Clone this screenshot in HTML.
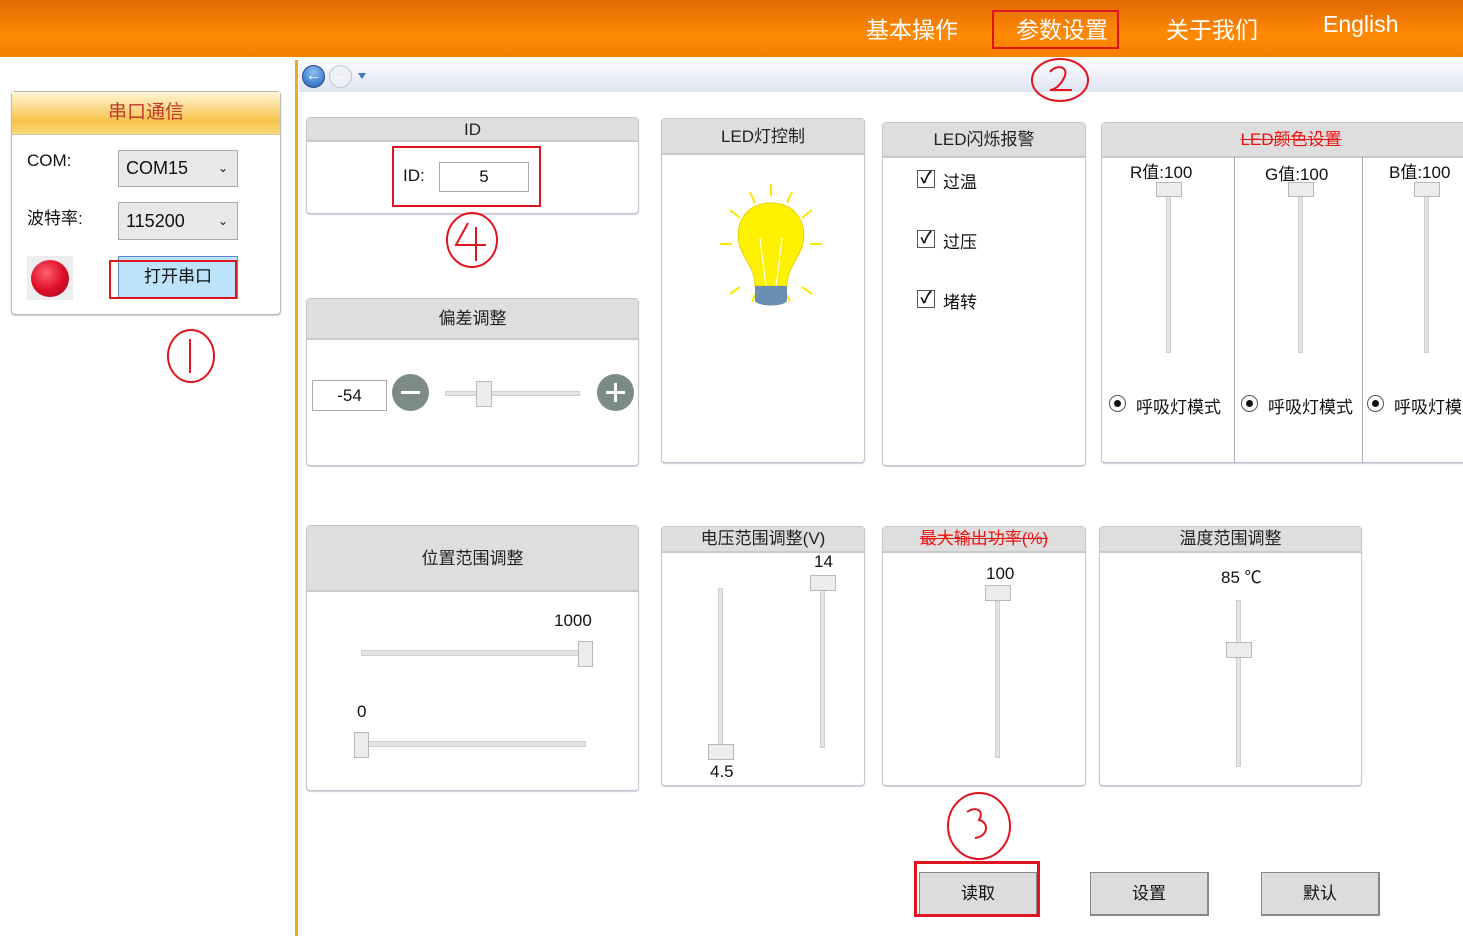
<!DOCTYPE html>
<html><head><meta charset="utf-8"><style>
*{margin:0;padding:0;box-sizing:border-box}
body{width:1463px;height:936px;background:#fff;position:relative;overflow:hidden;font-family:"Liberation Sans","Noto Sans CJK SC",sans-serif;color:#111}
.a{position:absolute}
.top{left:0;top:0;width:1463px;height:57px;background:linear-gradient(#e06800,#ff8a05 60%,#f57f00)}
.nav{color:#fff;font-size:23px;top:11px}
.panel{position:absolute;border:1px solid #c4c8cc;border-radius:4px;background:#fff;box-shadow:0 1px 1px #ccd}
.hd{background:#dedede;border-bottom:2px solid #c6cbd0;text-align:center;font-size:17px;color:#222;white-space:nowrap}
.thumb{position:absolute;background:#ececec;border:1px solid #b8b8b8}
.track{position:absolute;background:#e4e4e4;border:1px solid #d0d0d0}
.cb{position:absolute;width:18px;height:18px;border:1px solid #555;background:#fff;font-size:16px;line-height:16px;text-align:center;font-weight:bold}
.rd{position:absolute;width:17px;height:17px;border:1px solid #555;border-radius:50%;background:#fff}
.rd:after{content:"";position:absolute;left:4px;top:4px;width:7px;height:7px;border-radius:50%;background:#111}
.btn{position:absolute;width:119px;height:44px;background:#dcdcdc;border:1px solid #888;border-width:1px 2px 2px 1px;text-align:center;line-height:42px;font-size:17px}
.red{position:absolute;border:2px solid #e0141e}
.t{position:absolute;font-size:17px;white-space:nowrap}
</style></head><body>
<div class="a top"></div>
<div class="a nav" style="left:866px">基本操作</div>
<div class="a nav" style="left:1016px">参数设置</div>
<div class="red" style="left:992px;top:10px;width:127px;height:39px"></div>
<div class="a nav" style="left:1166px">关于我们</div>
<div class="a nav" style="left:1323px">English</div>

<!-- left panel -->
<div class="panel" style="left:11px;top:91px;width:270px;height:224px;border-color:#b8b8b8">
<div style="height:43px;background:linear-gradient(#fff5d8,#f7c34a 70%,#fbd87a);border-bottom:1px solid #d8c8a0;text-align:center;line-height:42px;font-size:19px;color:#c0392b">串口通信</div>
</div>
<div class="t" style="left:27px;top:151px">COM:</div>
<div class="a" style="left:118px;top:150px;width:120px;height:37px;background:#e8e8e8;border:1px solid #aaa;font-size:18px;line-height:35px;padding-left:7px">COM15<span style="position:absolute;right:9px;font-size:12px">⌄</span></div>
<div class="t" style="left:27px;top:204px">波特率:</div>
<div class="a" style="left:118px;top:202px;width:120px;height:38px;background:#e8e8e8;border:1px solid #aaa;font-size:18px;line-height:36px;padding-left:7px">115200<span style="position:absolute;right:9px;font-size:12px">⌄</span></div>
<div class="a" style="left:27px;top:256px;width:46px;height:44px;background:#eee"></div>
<div class="a" style="left:31px;top:260px;width:38px;height:37px;border-radius:50%;background:radial-gradient(circle at 40% 35%,#ff6070,#e0102a 50%,#a0001a)"></div>
<div class="a" style="left:118px;top:256px;width:120px;height:43px;background:#bde3fb;border:1px solid #5a8ac0;text-align:center;line-height:40px;font-size:17px">打开串口</div>
<div class="red" style="left:109px;top:260px;width:128px;height:39px"></div>
<svg class="a" style="left:164px;top:327px" width="54" height="58"><ellipse cx="27" cy="29" rx="23" ry="26" fill="none" stroke="#e0141e" stroke-width="2"/><path d="M26 12v34" stroke="#e0141e" stroke-width="2"/></svg>

<div class="a" style="left:295px;top:60px;width:3px;height:876px;background:#f5a623"></div>
<div class="a" style="left:299px;top:62px;width:1164px;height:30px;background:linear-gradient(#fafbfe,#dfe4f2)"></div>
<div class="a" style="left:302px;top:65px;width:23px;height:23px;border-radius:50%;background:radial-gradient(circle at 50% 30%,#8ec0f0,#1a5fc0);border:1px solid #2a4a80;color:#fff;font-size:16px;line-height:20px;text-align:center;font-weight:bold">←</div>
<div class="a" style="left:329px;top:65px;width:23px;height:23px;border-radius:50%;background:#eef0f6;border:1px solid #c0c6d4;color:#fff;font-size:16px;line-height:20px;text-align:center">→</div>
<div class="a" style="left:358px;top:73px;width:0;height:0;border:4px solid transparent;border-top:6px solid #3a7ac8"></div>
<svg class="a" style="left:1028px;top:56px" width="64" height="50"><ellipse cx="32" cy="24" rx="28" ry="21" fill="none" stroke="#e0141e" stroke-width="2"/><path d="M22 16c6-8 20-6 14 6s-14 12-14 12h22" fill="none" stroke="#e0141e" stroke-width="2"/></svg>

<!-- ID -->
<div class="panel" style="left:306px;top:117px;width:333px;height:97px"><div class="hd" style="height:24px;line-height:23px">ID</div></div>
<div class="t" style="left:403px;top:166px">ID:</div>
<div class="a" style="left:439px;top:162px;width:90px;height:30px;border:1px solid #aaa;text-align:center;line-height:28px;font-size:17px">5</div>
<div class="red" style="left:392px;top:146px;width:149px;height:61px"></div>
<svg class="a" style="left:444px;top:211px" width="56" height="58"><ellipse cx="28" cy="29" rx="25" ry="27" fill="none" stroke="#e0141e" stroke-width="2"/><path d="M24 12L12 34h30M32 16v34" fill="none" stroke="#e0141e" stroke-width="2"/></svg>

<!-- 偏差 -->
<div class="panel" style="left:306px;top:298px;width:333px;height:168px"><div class="hd" style="height:41px;line-height:40px">偏差调整</div></div>
<div class="a" style="left:312px;top:380px;width:75px;height:31px;border:1px solid #aaa;text-align:center;line-height:29px;font-size:17px">-54</div>
<div class="a" style="left:392px;top:374px;width:37px;height:37px;border-radius:50%;background:#7c8b87"><div class="a" style="left:9px;top:17px;width:19px;height:3px;background:#fff"></div></div>
<div class="track" style="left:445px;top:391px;width:135px;height:5px"></div>
<div class="thumb" style="left:476px;top:381px;width:16px;height:26px"></div>
<div class="a" style="left:597px;top:374px;width:37px;height:37px;border-radius:50%;background:#7c8b87"><div class="a" style="left:9px;top:17px;width:19px;height:3px;background:#fff"></div><div class="a" style="left:17px;top:9px;width:3px;height:19px;background:#fff"></div></div>

<!-- LED灯控制 -->
<div class="panel" style="left:661px;top:118px;width:204px;height:345px"><div class="hd" style="height:36px;line-height:35px">LED灯控制</div></div>
<svg class="a" style="left:700px;top:180px" width="140" height="130">
<g stroke="#ffe500" stroke-width="2"><path d="M71 4v12M50 12l5 11M92 12l-5 11M30 30l10 8M112 30l-10 8M32 64h-12M110 64h12M30 114l10-7M112 114l-10-7M52 122l5-11M90 122l-5-11"/></g>
<path d="M71 23c-25 0-36 20-32 40 3 15 16 24 16 43h32c0-19 13-28 16-43 4-20-7-40-32-40z" fill="#fff200" stroke="#e8d000"/>
<path d="M55 106h32v15c-4 6-28 6-32 0z" fill="#6a8fb0"/>
<path d="M60 58l6 48M82 58l-6 48" stroke="#fff" stroke-width="1.2"/>
</svg>

<!-- LED闪烁报警 -->
<div class="panel" style="left:882px;top:122px;width:204px;height:344px"><div class="hd" style="height:35px;line-height:34px">LED闪烁报警</div></div>
<div class="cb" style="left:917px;top:170px">✓</div><div class="t" style="left:943px;top:168px">过温</div>
<div class="cb" style="left:917px;top:230px">✓</div><div class="t" style="left:943px;top:228px">过压</div>
<div class="cb" style="left:917px;top:290px">✓</div><div class="t" style="left:943px;top:288px">堵转</div>

<!-- LED颜色 -->
<div class="panel" style="left:1101px;top:122px;width:380px;height:341px"><div class="hd" style="height:35px;line-height:34px;color:#f01010;text-decoration:line-through">LED颜色设置</div></div>
<div class="a" style="left:1234px;top:157px;width:1px;height:306px;background:#aab"></div>
<div class="a" style="left:1362px;top:157px;width:1px;height:306px;background:#aab"></div>
<div class="t" style="left:1130px;top:158px">R值:100</div>
<div class="t" style="left:1265px;top:160px">G值:100</div>
<div class="t" style="left:1389px;top:158px">B值:100</div>
<div class="track" style="left:1166px;top:195px;width:5px;height:158px"></div>
<div class="thumb" style="left:1156px;top:182px;width:26px;height:15px"></div>
<div class="track" style="left:1298px;top:195px;width:5px;height:158px"></div>
<div class="thumb" style="left:1288px;top:182px;width:26px;height:15px"></div>
<div class="track" style="left:1424px;top:195px;width:5px;height:158px"></div>
<div class="thumb" style="left:1414px;top:182px;width:26px;height:15px"></div>
<div class="rd" style="left:1109px;top:395px"></div><div class="t" style="left:1136px;top:393px">呼吸灯模式</div>
<div class="rd" style="left:1241px;top:395px"></div><div class="t" style="left:1268px;top:393px">呼吸灯模式</div>
<div class="rd" style="left:1367px;top:395px"></div><div class="t" style="left:1394px;top:393px">呼吸灯模式</div>

<!-- 位置 -->
<div class="panel" style="left:306px;top:525px;width:333px;height:266px"><div class="hd" style="height:66px;line-height:66px">位置范围调整</div></div>
<div class="t" style="left:554px;top:611px">1000</div>
<div class="track" style="left:361px;top:650px;width:225px;height:6px"></div>
<div class="thumb" style="left:578px;top:641px;width:15px;height:26px"></div>
<div class="t" style="left:357px;top:702px">0</div>
<div class="track" style="left:365px;top:741px;width:221px;height:6px"></div>
<div class="thumb" style="left:354px;top:732px;width:15px;height:26px"></div>

<!-- 电压 -->
<div class="panel" style="left:661px;top:526px;width:204px;height:260px"><div class="hd" style="height:26px;line-height:24px">电压范围调整(V)</div></div>
<div class="t" style="left:814px;top:552px">14</div>
<div class="track" style="left:718px;top:588px;width:5px;height:162px"></div>
<div class="thumb" style="left:708px;top:744px;width:26px;height:16px"></div>
<div class="t" style="left:710px;top:762px">4.5</div>
<div class="track" style="left:820px;top:588px;width:5px;height:160px"></div>
<div class="thumb" style="left:810px;top:575px;width:26px;height:16px"></div>

<!-- 最大输出 -->
<div class="panel" style="left:882px;top:526px;width:204px;height:260px"><div class="hd" style="height:26px;line-height:24px;color:#f01010;text-decoration:line-through">最大输出功率(%)</div></div>
<div class="t" style="left:986px;top:564px">100</div>
<div class="track" style="left:995px;top:598px;width:5px;height:160px"></div>
<div class="thumb" style="left:985px;top:585px;width:26px;height:16px"></div>

<!-- 温度 -->
<div class="panel" style="left:1099px;top:526px;width:263px;height:260px"><div class="hd" style="height:26px;line-height:24px">温度范围调整</div></div>
<div class="t" style="left:1221px;top:563px">85 ℃</div>
<div class="track" style="left:1236px;top:600px;width:5px;height:167px"></div>
<div class="thumb" style="left:1226px;top:642px;width:26px;height:16px"></div>

<svg class="a" style="left:945px;top:790px" width="70" height="72"><ellipse cx="34" cy="36" rx="31" ry="33" fill="none" stroke="#e0141e" stroke-width="2"/><path d="M22 22c8-6 18-2 12 8 10 2 10 16-4 18" fill="none" stroke="#e0141e" stroke-width="2"/></svg>

<div class="btn" style="left:919px;top:872px">读取</div>
<div class="red" style="left:914px;top:861px;width:126px;height:56px;border-width:3px"></div>
<div class="btn" style="left:1090px;top:872px">设置</div>
<div class="btn" style="left:1261px;top:872px">默认</div>
</body></html>
